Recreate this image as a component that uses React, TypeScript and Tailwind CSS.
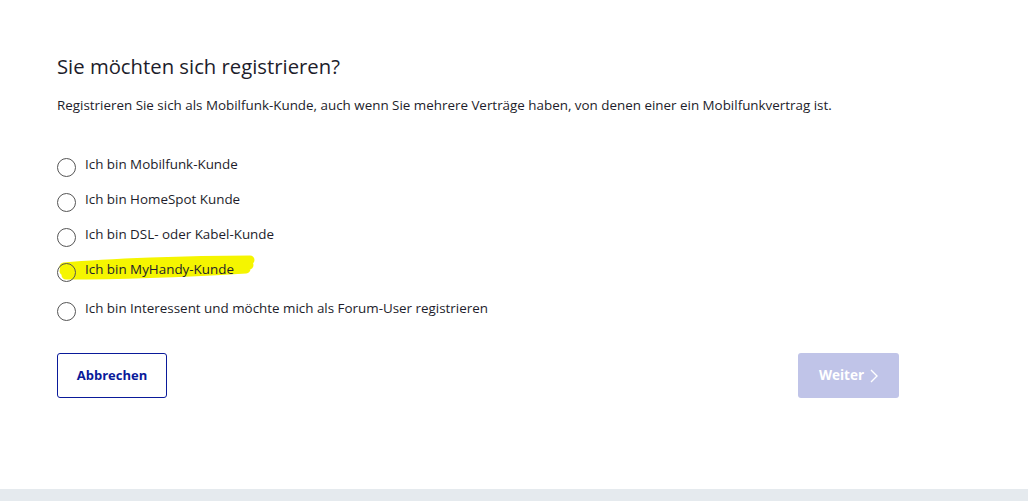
import { useState } from 'react';

const options = [
  'Ich bin Mobilfunk-Kunde',
  'Ich bin HomeSpot Kunde',
  'Ich bin DSL- oder Kabel-Kunde',
  'Ich bin MyHandy-Kunde',
  'Ich bin Interessent und möchte mich als Forum-User registrieren',
];

export default function App() {
  const [selected, setSelected] = useState<number | null>(null);

  return (
    <div className="min-h-[501px] bg-white flex flex-col font-['Open_Sans',sans-serif] text-[#1d1d2b]">
      <div className="flex-1 pl-[57px] pt-[50px] w-[899px]">
        <h1 className="text-[20.3px] leading-[32px] font-normal">Sie möchten sich registrieren?</h1>
        <p className="mt-[13px] text-[13.4px] leading-[20px]">
          Registrieren Sie sich als Mobilfunk-Kunde, auch wenn Sie mehrere Verträge haben, von denen einer ein Mobilfunkvertrag ist.
        </p>

        <div className="mt-[39px] flex flex-col">
          {options.map((label, i) => (
            <label
              key={label}
              className={`relative flex items-start gap-[9px] cursor-pointer ${i === 4 ? 'mt-[16px]' : i === 0 ? '' : 'mt-[12px]'}`}
              onClick={() => setSelected(i)}
            >
              {i === 3 && (
                <svg className="absolute left-[1px] top-[-6px] pointer-events-none" width="198" height="30" viewBox="0 0 198 30">
                  <path
                    d="M6 14 C50 10 130 7 192 7 M6 18 C60 16 130 13 191 12 M8 22 C60 22 120 20 188 16"
                    stroke="#f5f500"
                    strokeWidth="9"
                    strokeLinecap="round"
                    fill="none"
                  />
                </svg>
              )}
              <span className="relative mt-[4px] w-[19px] h-[19px] rounded-full border border-[#555] shrink-0 flex items-center justify-center">
                {selected === i && <span className="w-[9px] h-[9px] rounded-full bg-[#0019a5]" />}
              </span>
              <span className="relative text-[13.4px] leading-[20px]">{label}</span>
            </label>
          ))}
        </div>

        <div className="mt-[32px] flex justify-between items-center">
          <button className="w-[110px] h-[45px] border border-[#0a1a9a] rounded-[3px] text-[#0a1a9a] text-[13px] font-bold bg-white">
            Abbrechen
          </button>
          <button className="w-[101px] h-[45px] rounded-[3px] bg-[#c0c4e8] text-white text-[13.5px] font-bold flex items-center justify-center gap-[6px]">
            Weiter
            <svg width="8" height="14" viewBox="0 0 8 14" fill="none">
              <path d="M1 1 L7 7 L1 13" stroke="white" strokeWidth="1.4" />
            </svg>
          </button>
        </div>
      </div>
      <div className="h-[12px] bg-[#e5eaee] mt-auto" />
    </div>
  );
}
